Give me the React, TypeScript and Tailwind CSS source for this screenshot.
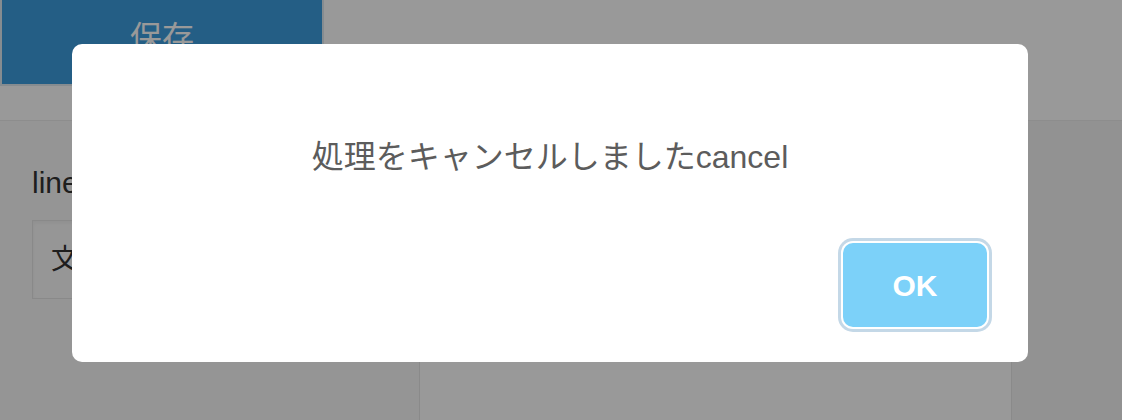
import React from "react";

export default function App() {
  const font = { fontFamily: '"Liberation Sans", "Noto Sans CJK JP", sans-serif' };
  return (
    <div className="relative w-full h-[420px] overflow-hidden bg-[#f3f3f3]" style={font}>
      {/* header */}
      <div className="h-[121px] bg-white border-b border-[#ececec]">
        <div className="w-[324px] h-[86px] bg-[#3c9dde] border-2 border-t-0 border-[#dfe9f0] flex items-center justify-center pb-[9px]">
          <span className="text-white text-[32px] leading-[40px]">保存</span>
        </div>
      </div>
      {/* body */}
      <div className="flex h-[299px]">
        <div className="w-[419px] bg-[#f8f8f8] pl-[32px] pt-[42px] pr-[20px]">
          <div className="text-[30px] leading-[40px] text-[#333] whitespace-nowrap">lineアカウント</div>
          <div className="mt-[17px] h-[79px] border border-[#e4e4e4] bg-[#fbfbfb] shadow-inner flex items-center pl-[18px] text-[28px] text-[#333]">
            文字を入力
          </div>
        </div>
        <div className="w-[593px] mt-[20px] bg-white border-x border-t border-[#e6e6e6]" />
        <div className="flex-1" />
      </div>
      {/* overlay */}
      <div className="absolute inset-0 bg-black/40 flex items-start pt-[44px] pl-[72px]">
        <div className="w-[956px] h-[318px] rounded-[10px] bg-white flex flex-col pt-[93px]">
          <p className="text-center text-[32px] leading-[40px] text-[#5c5c5c] whitespace-nowrap">
            処理をキャンセルしましたcancel
          </p>
          <div className="mt-[66px] flex justify-end pr-[41px]">
            <button className="w-[144px] h-[84px] rounded-[10px] bg-[#7cd1f9] text-white font-bold text-[30px] shadow-[0_0_0_2px_#fff,0_0_0_5px_#c4d8e7] flex items-center justify-center">
              OK
            </button>
          </div>
        </div>
      </div>
    </div>
  );
}
